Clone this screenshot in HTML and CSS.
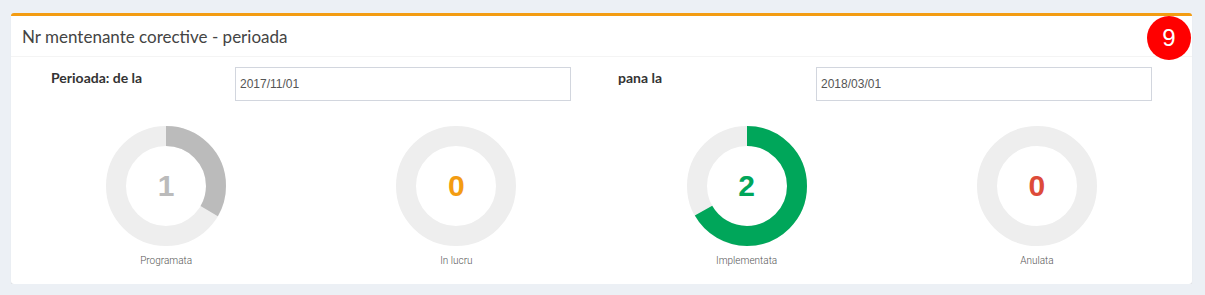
FILE: index.html
```html
<!DOCTYPE html>
<html lang="ro">
<head>
  <meta charset="UTF-8">
  <title>Nr mentenante corective</title>
  <link rel="stylesheet" href="styles.css">
</head>
<body>

<div class="box">
  <div class="box-header">
    <h3 class="box-title">Nr mentenante corective - perioada</h3>
    <span class="badge">9</span>
  </div>
  <div class="box-body">
    <div class="period-row">
      <label class="period-label from-label">Perioada: de la</label>
      <input type="text" class="input-field" value="2017/11/01">
      <label class="period-label to-label">pana la</label>
      <input type="text" class="input-field" value="2018/03/01">
    </div>

    <div class="knobs">
      <div class="knob">
        <div class="knob-ring">
          <svg width="120" height="120" viewBox="0 0 120 120">
            <circle cx="60" cy="60" r="50" class="track"/>
            <circle cx="60" cy="60" r="50" class="arc arc-gray" stroke-dasharray="104.72 314.16"/>
          </svg>
          <span class="knob-value gray">1</span>
        </div>
        <div class="knob-label">Programata</div>
      </div>
      <div class="knob">
        <div class="knob-ring">
          <svg width="120" height="120" viewBox="0 0 120 120">
            <circle cx="60" cy="60" r="50" class="track"/>
          </svg>
          <span class="knob-value orange">0</span>
        </div>
        <div class="knob-label">In lucru</div>
      </div>
      <div class="knob">
        <div class="knob-ring">
          <svg width="120" height="120" viewBox="0 0 120 120">
            <circle cx="60" cy="60" r="50" class="track"/>
            <circle cx="60" cy="60" r="50" class="arc arc-green" stroke-dasharray="209.44 314.16"/>
          </svg>
          <span class="knob-value green">2</span>
        </div>
        <div class="knob-label">Implementata</div>
      </div>
      <div class="knob">
        <div class="knob-ring">
          <svg width="120" height="120" viewBox="0 0 120 120">
            <circle cx="60" cy="60" r="50" class="track"/>
          </svg>
          <span class="knob-value red">0</span>
        </div>
        <div class="knob-label">Anulata</div>
      </div>
    </div>
  </div>
</div>

</body>
</html>
```

FILE: styles.css
```css
body {
  font-family: Lato, "Open Sans", sans-serif;
  background-color: #ecf0f5;
  margin: 0;
  padding: 13px 13px 0 11px;
  color: #333;
}
.box {
  position: relative;
  background-color: #fff;
  border-top: 3px solid #f39c12;
  border-radius: 3px;
  box-shadow: 0 1px 1px rgba(0, 0, 0, 0.1);
}
.box-header {
  height: 40px;
  border-bottom: 1px solid #f4f4f4;
  padding: 0 11px;
  display: flex;
  align-items: center;
}
.box-title {
  margin: 0;
  font-size: 17px;
  font-weight: normal;
  color: #444;
}
.badge {
  position: absolute;
  top: 0;
  right: 1px;
  width: 44px;
  height: 44px;
  border-radius: 50%;
  background-color: #f00;
  color: #fff;
  font-family: "Liberation Sans", Arial, sans-serif;
  font-size: 24px;
  display: flex;
  align-items: center;
  justify-content: center;
}
.box-body {
  padding: 10px 10px 18px;
}
.period-row {
  display: flex;
  align-items: flex-start;
  padding-left: 30px;
}
.period-label {
  font-weight: bold;
  font-size: 14px;
  color: #333;
  padding-top: 2px;
}
.from-label {
  width: 184px;
}
.to-label {
  width: 198px;
  margin-left: 47px;
}
.input-field {
  width: 336px;
  height: 34px;
  box-sizing: border-box;
  border: 1px solid #d2d6de;
  padding: 6px 4px;
  font-family: "Liberation Sans", Arial, sans-serif;
  font-size: 12px;
  color: #555;
  margin: 0;
}
.knobs {
  display: grid;
  grid-template-columns: repeat(4, 1fr);
  margin-top: 25px;
}
.knob {
  display: flex;
  flex-direction: column;
  align-items: center;
}
.knob-ring {
  position: relative;
  width: 120px;
  height: 120px;
}
.knob-ring svg {
  display: block;
}
.track {
  fill: none;
  stroke: #eee;
  stroke-width: 20;
}
.arc {
  fill: none;
  stroke-width: 20;
  transform: rotate(-90deg);
  transform-origin: 60px 60px;
}
.arc-gray {
  stroke: #bbb;
}
.arc-green {
  stroke: #00a65a;
}
.knob-value {
  position: absolute;
  top: 0;
  left: 0;
  right: 0;
  bottom: 0;
  display: flex;
  align-items: center;
  justify-content: center;
  font-family: "Liberation Sans", Arial, sans-serif;
  font-weight: bold;
  font-size: 30px;
}
.gray { color: #bbb; }
.orange { color: #f39c12; }
.green { color: #00a65a; }
.red { color: #dd4b39; }
.knob-label {
  margin-top: 9px;
  font-family: Roboto, "Liberation Sans", sans-serif;
  font-weight: 300;
  font-size: 10px;
  color: #555;
}
```
